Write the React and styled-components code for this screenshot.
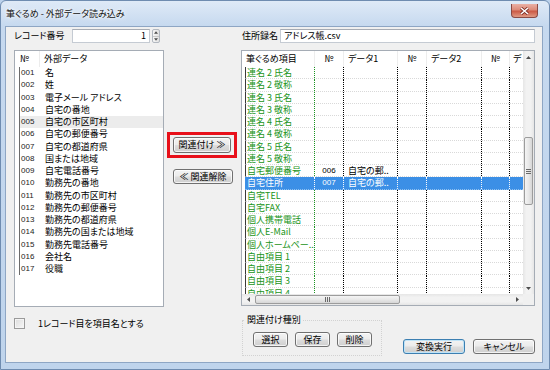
import React from "react";
import styled, { createGlobalStyle } from "styled-components";

const externalFields = [
  "名",
  "姓",
  "電子メール アドレス",
  "自宅の番地",
  "自宅の市区町村",
  "自宅の郵便番号",
  "自宅の都道府県",
  "国または地域",
  "自宅電話番号",
  "勤務先の番地",
  "勤務先の市区町村",
  "勤務先の郵便番号",
  "勤務先の都道府県",
  "勤務先の国または地域",
  "勤務先電話番号",
  "会社名",
  "役職",
];

const gridRows = [
  { name: "連名 2 氏名" },
  { name: "連名 2 敬称" },
  { name: "連名 3 氏名" },
  { name: "連名 3 敬称" },
  { name: "連名 4 氏名" },
  { name: "連名 4 敬称" },
  { name: "連名 5 氏名" },
  { name: "連名 5 敬称" },
  { name: "自宅郵便番号", no: "006", data: "自宅の郵.." },
  { name: "自宅住所", no: "007", data: "自宅の郵..", selected: true },
  { name: "自宅TEL" },
  { name: "自宅FAX" },
  { name: "個人携帯電話" },
  { name: "個人E-Mail" },
  { name: "個人ホームペー.." },
  { name: "自由項目 1" },
  { name: "自由項目 2" },
  { name: "自由項目 3" },
  { name: "自由項目 4" },
];

const Arrow = ({ dir }) => {
  const horiz = dir === "left" || dir === "right";
  const pts = {
    up: "0,3 2.5,0 5,3",
    down: "0,0 2.5,3 5,0",
    left: "3,0 0,2.5 3,5",
    right: "0,0 3,2.5 0,5",
  }[dir];
  return (
    <svg width={horiz ? 3 : 5} height={horiz ? 5 : 3} viewBox={horiz ? "0 0 3 5" : "0 0 5 3"}>
      <polygon points={pts} fill="#4d4d4d" />
    </svg>
  );
};

const App = () => {
  return (
    <>
      <GlobalStyle />
      <Window>
        <TitleBar>
          <Title>筆ぐるめ - 外部データ読み込み</Title>
          <CloseButton>
            <svg width="9" height="8" viewBox="0 0 9 8">
              <path d="M1 1 L8 7 M8 1 L1 7" stroke="#7a2a22" strokeWidth="3" />
              <path d="M1 1 L8 7 M8 1 L1 7" stroke="#fff" strokeWidth="1.6" />
            </svg>
          </CloseButton>
        </TitleBar>

        <Client>
          <LeftPane>
            <TopRow>
              <FieldLabel $w={58}>レコード番号</FieldLabel>
              <TextBox $w={78} $align="right">1</TextBox>
              <Spin>
                <SpinHalf><Arrow dir="up" /></SpinHalf>
                <SpinHalf><Arrow dir="down" /></SpinHalf>
              </Spin>
            </TopRow>

            <ListBox>
              <ListHeader>
                <HeadCell $w={25} $pad={5} $divider>№</HeadCell>
                <HeadCell $pad={4}>外部データ</HeadCell>
              </ListHeader>
              <ListRows>
                {externalFields.map((f, i) => (
                  <ListRow key={f} $selected={i === 4}>
                    <NoCell>{String(i + 1).padStart(3, "0")}</NoCell>
                    <span>{f}</span>
                  </ListRow>
                ))}
              </ListRows>
            </ListBox>

            <CheckRow>
              <CheckBox />
              <span>1レコード目を項目名とする</span>
            </CheckRow>
          </LeftPane>

          <MiddlePane>
            <Highlight>
              <Button $fill>関連付け ≫</Button>
            </Highlight>
            <Button $w={60} style={{ marginLeft: 9, marginTop: 11 }}>≪ 関連解除</Button>
          </MiddlePane>

          <RightPane>
            <TopRow $pad={1}>
              <FieldLabel $w={38}>住所録名</FieldLabel>
              <TextBox $grow>アドレス帳.csv</TextBox>
            </TopRow>

            <GridBox>
              <GridBody>
                <GridHeader>
                  <GHead $pad={4}>筆ぐるめ項目</GHead>
                  <GHead $center>№</GHead>
                  <GHead $pad={4}>データ1</GHead>
                  <GHead $center>№</GHead>
                  <GHead $pad={4}>データ2</GHead>
                  <GHead $center>№</GHead>
                  <GHead $pad={3} $last>デ</GHead>
                </GridHeader>
                <GridRows>
                  {gridRows.map((r) => (
                    <GridRow key={r.name} $selected={r.selected}>
                      <GCell $green={!r.selected} $pad={1}>{r.name}</GCell>
                      <GCell $center $num>{r.no}</GCell>
                      <GCell $pad={4}>{r.data}</GCell>
                      <GCell />
                      <GCell />
                      <GCell />
                      <GCell $last />
                    </GridRow>
                  ))}
                </GridRows>
              </GridBody>

              <VScroll>
                <ScrollArrow $v><Arrow dir="up" /></ScrollArrow>
                <VThumb>
                  <Grip $v><i /><i /><i /></Grip>
                </VThumb>
                <ScrollArrow $v $end><Arrow dir="down" /></ScrollArrow>
              </VScroll>

              <HScroll>
                <ScrollArrow><Arrow dir="left" /></ScrollArrow>
                <HThumb>
                  <Grip><i /><i /><i /></Grip>
                </HThumb>
                <ScrollArrow $end><Arrow dir="right" /></ScrollArrow>
              </HScroll>
              <Corner />
            </GridBox>

            <BottomRow>
              <Group>
                <GroupLegend>関連付け種別</GroupLegend>
                <GroupButtons>
                  <Button $w={35}>選択</Button>
                  <Button $w={35}>保存</Button>
                  <Button $w={35}>削除</Button>
                </GroupButtons>
              </Group>
              <DialogButtons>
                <Button $w={62} $default>変換実行</Button>
                <Button $w={62}>キャンセル</Button>
              </DialogButtons>
            </BottomRow>
          </RightPane>
        </Client>
      </Window>
    </>
  );
};

export default App;

const GlobalStyle = createGlobalStyle`
  html, body {
    margin: 0;
    padding: 0;
    background: #bcd2ec;
  }
  body {
    font-family: "Noto Sans CJK JP", "Noto Sans", sans-serif;
    font-size: 9px;
    line-height: 12px;
    color: #000;
    font-feature-settings: "palt";
  }
  * {
    box-sizing: border-box;
  }
`;

const Window = styled.div`
  width: 550px;
  height: 370px;
  display: flex;
  flex-direction: column;
  border: 1px solid #6f8cb0;
  border-radius: 6px 6px 0 0;
  background: linear-gradient(to bottom, #dfeaf7 0px, #c6d9ef 25px, #bfd4ec 100%);
  overflow: hidden;
`;

const TitleBar = styled.div`
  height: 25px;
  display: flex;
  align-items: center;
  padding: 0 11px 0 5px;
`;

const Title = styled.div`
  font-size: 9px;
  color: #111;
  text-shadow: 0 0 6px #fff, 0 0 3px #fff;
`;

const CloseButton = styled.div`
  margin-left: auto;
  align-self: flex-start;
  margin-top: 3px;
  width: 27px;
  height: 14px;
  border: 1px solid #8a4a44;
  border-top: none;
  border-radius: 0 0 4px 4px;
  background: linear-gradient(to bottom, #eab0a4 0%, #dc8a78 45%, #cc5a45 55%, #e09a84 100%);
  display: flex;
  align-items: center;
  justify-content: center;
`;

const Client = styled.div`
  flex: 1;
  margin: 0 6px 6px 4px;
  border: 1px solid #8ea6c4;
  background: #f0f0f0;
  display: grid;
  grid-template-columns: 150px 77px 1fr;
  padding: 2px 7px 0 8px;
`;

const LeftPane = styled.div`
  display: flex;
  flex-direction: column;
`;

const MiddlePane = styled.div`
  display: flex;
  flex-direction: column;
  align-items: flex-start;
`;

const RightPane = styled.div`
  display: flex;
  flex-direction: column;
`;

const TopRow = styled.div`
  height: 14px;
  display: flex;
  align-items: center;
  padding-left: ${(p) => p.$pad || 0}px;
`;

const FieldLabel = styled.div`
  width: ${(p) => p.$w}px;
  flex-shrink: 0;
`;

const TextBox = styled.div`
  width: ${(p) => (p.$w ? `${p.$w}px` : "auto")};
  flex: ${(p) => (p.$grow ? 1 : "none")};
  height: 14px;
  background: #fff;
  border: 1px solid #c5cbd3;
  border-top-color: #a6abb3;
  text-align: ${(p) => p.$align || "left"};
  padding: 0 3px;
  line-height: 12px;
`;

const Spin = styled.div`
  width: 8px;
  height: 14px;
  margin-left: 2px;
  display: flex;
  flex-direction: column;
  border: 1px solid #b2b8c0;
  border-radius: 2px;
  background: linear-gradient(to right, #f6f6f6, #e2e2e2);
`;

const SpinHalf = styled.div`
  flex: 1;
  display: flex;
  align-items: center;
  justify-content: center;
  & + & {
    border-top: 1px solid #c8c8c8;
  }
  svg {
    width: 4px;
    height: 3px;
  }
`;

const ListBox = styled.div`
  margin-top: 7px;
  height: 257px;
  border: 1px solid #a5acb5;
  background: #fff;
  display: flex;
  flex-direction: column;
`;

const ListHeader = styled.div`
  height: 16px;
  display: flex;
  align-items: center;
  flex-shrink: 0;
`;

const HeadCell = styled.div`
  width: ${(p) => (p.$w ? `${p.$w}px` : "auto")};
  flex: ${(p) => (p.$w ? "none" : 1)};
  padding-left: ${(p) => p.$pad || 0}px;
  height: 16px;
  line-height: 16px;
  border-right: ${(p) => (p.$divider ? "1px solid #ececec" : "none")};
`;

const ListRows = styled.div`
  padding-left: 4px;
`;

const ListRow = styled.div`
  height: 12.25px;
  display: flex;
  align-items: center;
  border-left: 1px solid #6b6b6b;
  background: ${(p) => (p.$selected ? "#ececec" : "transparent")};
  white-space: nowrap;
`;

const NoCell = styled.span`
  width: 25px;
  padding-left: 1px;
  font-family: "Liberation Sans", Arial, sans-serif;
  font-size: 8px;
  color: #222;
`;

const CheckRow = styled.div`
  margin-top: 11px;
  height: 11px;
  display: flex;
  align-items: center;
  gap: 13px;
`;

const CheckBox = styled.div`
  width: 11px;
  height: 11px;
  border: 1px solid #9a9a9a;
  background: linear-gradient(135deg, #dcdcdc, #f7f7f7);
  box-shadow: inset 0 0 0 1px #f4f4f4;
`;

const Highlight = styled.div`
  margin-top: 103px;
  margin-left: 3px;
  width: 70px;
  height: 26px;
  border: 3px solid #e8101a;
  padding: 2px 3px 2px 3px;
  display: flex;
`;

const Button = styled.button`
  width: ${(p) => (p.$fill ? "auto" : `${p.$w}px`)};
  flex: ${(p) => (p.$fill ? 1 : "none")};
  height: ${(p) => (p.$fill ? "auto" : "15px")};
  padding: 0;
  font: inherit;
  font-size: 9px;
  line-height: 12px;
  color: #000;
  border: 1px solid ${(p) => (p.$default ? "#3c7fb1" : "#707070")};
  border-radius: 3px;
  background: linear-gradient(to bottom, #f3f3f3 0%, #ebebeb 48%, #dddddd 52%, #cfcfcf 100%);
  box-shadow: inset 0 0 0 1px ${(p) => (p.$default ? "#bfe3f7" : "rgba(255,255,255,0.75)")};
  white-space: nowrap;
`;

const GridBox = styled.div`
  margin-top: 7px;
  height: 256px;
  border: 1px solid #a5acb5;
  background: #fff;
  display: grid;
  grid-template-columns: 1fr 11px;
  grid-template-rows: 1fr 11px;
  overflow: hidden;
`;

const GridBody = styled.div`
  overflow: hidden;
  display: flex;
  flex-direction: column;
`;

const GridHeader = styled.div`
  height: 16px;
  flex-shrink: 0;
  display: grid;
  grid-template-columns: 73px 29px 54px 29px 55px 28px 1fr;
`;

const GHead = styled.div`
  height: 16px;
  line-height: 16px;
  padding-left: ${(p) => p.$pad || 0}px;
  text-align: ${(p) => (p.$center ? "center" : "left")};
  border-right: ${(p) => (p.$last ? "none" : "1px solid #ededed")};
  white-space: nowrap;
  overflow: hidden;
`;

const GridRows = styled.div`
  padding-left: 3px;
`;

const GridRow = styled.div`
  height: 12.25px;
  display: grid;
  grid-template-columns: 69px 29px 54px 29px 55px 28px 1fr;
  border-left: 1px solid ${(p) => (p.$selected ? "#3b8fe6" : "#3a3a3a")};
  border-bottom: 1px dotted ${(p) => (p.$selected ? "#8ec0f0" : "#d9d9d9")};
  background: ${(p) => (p.$selected ? "#3b8fe6" : "transparent")};
  color: ${(p) => (p.$selected ? "#fff" : "#000")};
`;

const GCell = styled.div`
  height: 100%;
  line-height: 11px;
  padding-left: ${(p) => p.$pad || 0}px;
  text-align: ${(p) => (p.$center ? "center" : "left")};
  color: ${(p) => (p.$green ? "#1a9420" : "inherit")};
  font-family: ${(p) =>
    p.$num ? '"Liberation Sans", Arial, sans-serif' : "inherit"};
  font-size: ${(p) => (p.$num ? "8px" : "9px")};
  border-right: ${(p) => (p.$last ? "none" : "1px dotted #d9d9d9")};
  border-right-color: inherit;
  white-space: nowrap;
  overflow: hidden;
`;

const VScroll = styled.div`
  display: flex;
  flex-direction: column;
  background: linear-gradient(to right, #e6e6e6 0, #f2f2f2 30%, #f2f2f2 70%, #e6e6e6 100%);
`;

const HScroll = styled.div`
  display: flex;
  align-items: stretch;
  background: linear-gradient(to bottom, #e6e6e6 0, #f2f2f2 30%, #f2f2f2 70%, #e6e6e6 100%);
`;

const ScrollArrow = styled.div`
  width: ${(p) => (p.$v ? "auto" : "12px")};
  height: ${(p) => (p.$v ? "12px" : "auto")};
  display: flex;
  align-items: center;
  justify-content: center;
  margin-${(p) => (p.$v ? "top" : "left")}: ${(p) => (p.$end ? "auto" : "0")};
`;

const VThumb = styled.div`
  margin: 74px 1px 0 1px;
  height: 68px;
  border: 1px solid #9c9c9c;
  border-radius: 2px;
  background: linear-gradient(to right, #f4f4f4 0%, #e8e8e8 50%, #d6d6d6 100%);
  display: flex;
  align-items: center;
  justify-content: center;
`;

const HThumb = styled.div`
  margin: 1px 0 1px 1px;
  width: 145px;
  border: 1px solid #9c9c9c;
  border-radius: 2px;
  background: linear-gradient(to bottom, #f4f4f4 0%, #e8e8e8 50%, #d6d6d6 100%);
  display: flex;
  align-items: center;
  justify-content: center;
`;

const Grip = styled.div`
  display: flex;
  flex-direction: ${(p) => (p.$v ? "column" : "row")};
  gap: 1px;
  i {
    display: block;
    width: ${(p) => (p.$v ? "5px" : "1px")};
    height: ${(p) => (p.$v ? "1px" : "5px")};
    background: #6a6a6a;
  }
`;

const Corner = styled.div`
  background: #f0f0f0;
`;

const BottomRow = styled.div`
  display: flex;
  align-items: flex-start;
  margin-top: 8px;
`;

const Group = styled.fieldset`
  margin: 0 0 0 1px;
  width: 140px;
  height: 42px;
  padding: 0 0 0 10px;
  border: 1px dotted #d2d2d2;
  min-inline-size: 0;
`;

const GroupLegend = styled.legend`
  margin-left: -8px;
  padding: 0 2px;
  line-height: 12px;
`;

const GroupButtons = styled.div`
  display: flex;
  gap: 7px;
  padding-top: 6px;
`;

const DialogButtons = styled.div`
  margin-left: auto;
  margin-top: 25px;
  display: flex;
  gap: 8px;
`;
